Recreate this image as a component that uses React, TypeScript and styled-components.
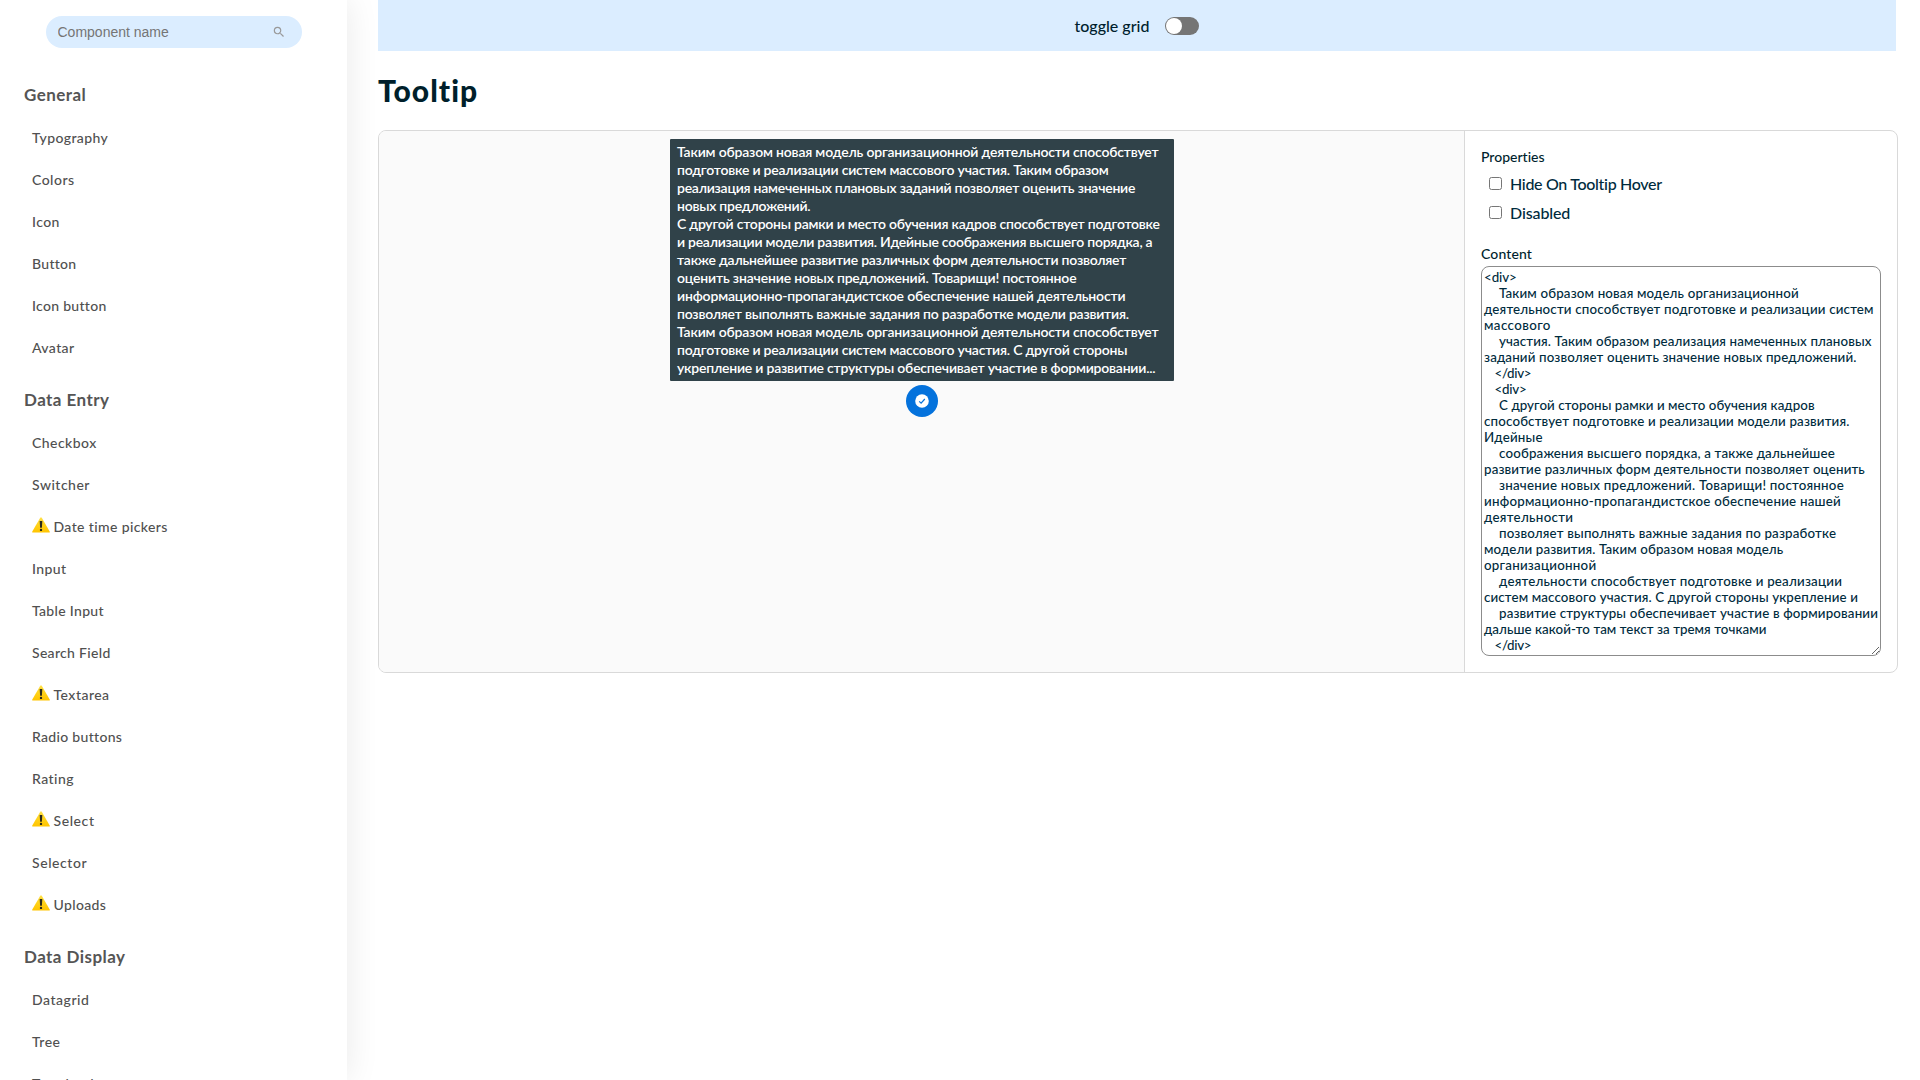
import React from 'react';
import styled, { createGlobalStyle } from 'styled-components';

const GlobalStyle = createGlobalStyle`
  *, *::before, *::after { box-sizing: border-box; }
  html, body { margin: 0; height: 1080px; overflow: hidden; background: #fff; }
  body {
    font-family: Lato, "Noto Sans", sans-serif;
    font-variant-ligatures: none;
    color: #002b3d;
  }
`;

const Page = styled.div`
  display: flex;
  width: 1920px;
  height: 1080px;
  overflow: hidden;
`;

const Sidebar = styled.nav`
  flex: none;
  width: 347px;
  height: 1080px;
  padding-top: 16px;
  overflow: hidden;
  background: #fff;
`;

const SidebarShell = styled.div`
  flex: none;
  width: 347px;
  box-shadow: 0 0 32px rgba(0, 0, 0, 0.09);
`;

const SearchBox = styled.label`
  display: flex;
  align-items: center;
  justify-content: space-between;
  width: 256px;
  height: 32px;
  margin: 0 0 16px 46px;
  padding: 0 16px 0 11.5px;
  border-radius: 16px;
  background: #dbedff;
`;

const SearchInput = styled.input`
  width: 180px;
  padding: 0;
  border: 0;
  outline: 0;
  background: transparent;
  font: 14px "Liberation Sans", Arial, sans-serif;
  &::placeholder { color: #757575; opacity: 1; }
`;

const Group = styled.section`
  padding: 19px 0 0 24px;
`;

const GroupTitle = styled.h3`
  margin: 0 0 12px;
  font-size: 17px;
  line-height: 23px;
  height: 22px;
  font-weight: 700;
  letter-spacing: 0.44px;
  color: #555;
`;

const Item = styled.a<{ $track: number }>`
  display: flex;
  align-items: center;
  gap: 3.5px;
  height: 42px;
  padding-left: 8px;
  font-size: 14px;
  line-height: 18px;
  font-weight: 500;
  letter-spacing: ${(p) => p.$track + 0.03}px;
  color: #505050;
  white-space: nowrap;
`;

const WarningSvg = styled.svg`
  flex: none;
  width: 18px;
  height: 16px;
  margin-bottom: 4px;
`;

const Main = styled.main`
  width: 1520px;
  margin-left: 31px;
`;

const TopBar = styled.header`
  display: flex;
  align-items: center;
  justify-content: center;
  gap: 16px;
  width: 1518px;
  height: 51px;
  background: #dbedff;
  font-size: 16px;
  line-height: 19px;
  font-weight: 500;
  color: #001f2e;
`;

const Switch = styled.button`
  display: flex;
  align-items: center;
  width: 34px;
  height: 18px;
  margin-top: 1px;
  padding: 0 1px;
  border: 0;
  border-radius: 9px;
  background: #757575;
`;

const Knob = styled.span`
  width: 16px;
  height: 16px;
  border-radius: 50%;
  background: #fff;
`;

const Title = styled.h1`
  height: 79px;
  margin: 0;
  padding-top: 21px;
  font-size: 30px;
  line-height: 36px;
  font-weight: 900;
  letter-spacing: 1px;
  color: #001f2b;
`;

const Panel = styled.section`
  display: flex;
  width: 1520px;
  height: 543px;
  border: 1px solid #d9d9d9;
  border-radius: 8px;
  overflow: hidden;
`;

const Canvas = styled.div`
  flex: 1;
  display: flex;
  flex-direction: column;
  align-items: center;
  gap: 4px;
  padding: 8px 0 0;
  background: #fafafa;
`;

const TooltipBox = styled.div`
  width: 504px;
  padding: 4px 7.5px;
  border-radius: 1px;
  background: #304249;
  color: #fff;
  font-size: 14px;
  line-height: 18px;
  font-weight: 600;
`;

const Line = styled.div<{ $track: number; $indent?: number }>`
  padding-left: ${(p) => p.$indent ?? 0}px;
  letter-spacing: ${(p) => p.$track}px;
  white-space: nowrap;
`;

const RoundButton = styled.button`
  display: flex;
  align-items: center;
  justify-content: center;
  width: 32px;
  height: 32px;
  padding: 0;
  border: 0;
  border-radius: 50%;
  background: #0472dc;
`;

const Settings = styled.aside`
  flex: none;
  width: 433px;
  padding: 16px;
  border-left: 1px solid #d9d9d9;
`;

const Caption = styled.div<{ $track: number; $top?: number }>`
  margin: ${(p) => p.$top ?? 0}px 0 2px;
  font-size: 14px;
  line-height: 20px;
  font-weight: 500;
  letter-spacing: ${(p) => p.$track}px;
  color: #001f2e;
`;

const Option = styled.label<{ $track: number }>`
  display: flex;
  align-items: center;
  gap: 8px;
  height: 29px;
  padding-left: 8px;
  font-size: 16px;
  line-height: 19px;
  font-weight: 500;
  letter-spacing: ${(p) => p.$track}px;
`;

const Check = styled.input`
  width: 13px;
  height: 13px;
  margin: 0;
`;

const Editor = styled.div`
  width: 400px;
  height: 390px;
  padding: 2px;
  border: 1px solid #8c8c8c;
  border-radius: 8px;
  overflow: hidden;
  resize: both;
  font-size: 13.333px;
  line-height: 16px;
  font-weight: 500;
`;

type Entry = { name: string; track: number; warn?: boolean };

const groups: { title: string; items: Entry[] }[] = [
  {
    title: 'General',
    items: [
      { name: 'Typography', track: 0.367 },
      { name: 'Colors', track: 0.45 },
      { name: 'Icon', track: 0.4 },
      { name: 'Button', track: 0.274 },
      { name: 'Icon button', track: 0.271 },
      { name: 'Avatar', track: 0.361 },
    ],
  },
  {
    title: 'Data Entry',
    items: [
      { name: 'Checkbox', track: 0.417 },
      { name: 'Switcher', track: 0.478 },
      { name: 'Date time pickers', track: 0.356, warn: true },
      { name: 'Input', track: 0.397 },
      { name: 'Table Input', track: 0.291 },
      { name: 'Search Field', track: 0.282 },
      { name: 'Textarea', track: 0.44, warn: true },
      { name: 'Radio buttons', track: 0.28 },
      { name: 'Rating', track: 0.419 },
      { name: 'Select', track: 0.56, warn: true },
      { name: 'Selector', track: 0.55 },
      { name: 'Uploads', track: 0.32, warn: true },
    ],
  },
  {
    title: 'Data Display',
    items: [
      { name: 'Datagrid', track: 0.498 },
      { name: 'Tree', track: 0.48 },
      { name: 'Tag cloud', track: 0.4 },
    ],
  },
];

const tooltipLines: [string, number][] = [
  ['Таким образом новая модель организационной деятельности способствует', -0.188],
  ['подготовке и реализации систем массового участия. Таким образом', -0.21],
  ['реализация намеченных плановых заданий позволяет оценить значение', -0.241],
  ['новых предложений.', -0.24],
  ['С другой стороны рамки и место обучения кадров способствует подготовке', -0.224],
  ['и реализации модели развития. Идейные соображения высшего порядка, а', -0.265],
  ['также дальнейшее развитие различных форм деятельности позволяет', -0.233],
  ['оценить значение новых предложений. Товарищи! постоянное', -0.18],
  ['информационно-пропагандистское обеспечение нашей деятельности', -0.173],
  ['позволяет выполнять важные задания по разработке модели развития.', -0.22],
  ['Таким образом новая модель организационной деятельности способствует', -0.188],
  ['подготовке и реализации систем массового участия. С другой стороны', -0.21],
  ['укрепление и развитие структуры обеспечивает участие в формировании...', -0.213],
];

const editorLines: [string, number, number][] = [
  ['<div>', -0.1, 0],
  ['Таким образом новая модель организационной', 0.155, 15],
  ['деятельности способствует подготовке и реализации систем', 0.175, 0],
  ['массового', 0.4, 0],
  ['участия. Таким образом реализация намеченных плановых', 0.13, 15],
  ['заданий позволяет оценить значение новых предложений.', 0.142, 0],
  ['</div>', -0.3, 10.5],
  ['<div>', -0.25, 10.5],
  ['С другой стороны рамки и место обучения кадров', 0.065, 15],
  ['способствует подготовке и реализации модели развития.', 0.16, 0],
  ['Идейные', 0.216, 0],
  ['соображения высшего порядка, а также дальнейшее', 0.165, 15],
  ['развитие различных форм деятельности позволяет оценить', 0.145, 0],
  ['значение новых предложений. Товарищи! постоянное', 0.228, 15],
  ['информационно-пропагандистское обеспечение нашей', 0.225, 0],
  ['деятельности', 0.31, 0],
  ['позволяет выполнять важные задания по разработке', 0.168, 15],
  ['модели развития. Таким образом новая модель', 0.122, 0],
  ['организационной', 0.24, 0],
  ['деятельности способствует подготовке и реализации', 0.205, 15],
  ['систем массового участия. С другой стороны укрепление и', 0.13, 0],
  ['развитие структуры обеспечивает участие в формировании', 0.148, 15],
  ['дальше какой-то там текст за тремя точками', 0.06, 0],
  ['</div>', -0.3, 10.5],
];

const WarningIcon = () => (
  <WarningSvg viewBox="0 0 18 16">
    <defs>
      <linearGradient id="warn" x1="0" y1="0" x2="0" y2="1">
        <stop offset="0" stopColor="#ffe14a" />
        <stop offset="0.5" stopColor="#ffd21a" />
        <stop offset="1" stopColor="#ffc400" />
      </linearGradient>
    </defs>
    <path
      d="M8.1 0.9 Q9 -0.4 9.9 0.9 L17.7 14.4 Q18.2 15.6 17 15.6 H1 Q-0.2 15.6 0.3 14.4 Z"
      fill="url(#warn)"
    />
    <path d="M7.7 4 H10.3 L9.9 10.8 H8.1 Z" fill="#2b2a1c" />
    <circle cx="9" cy="12.9" r="1.2" fill="#2b2a1c" />
  </WarningSvg>
);

const SearchIcon = () => (
  <svg width="14" height="14" viewBox="0 0 24 24" fill="#999">
    <path d="M15.5 14h-.79l-.28-.27A6.47 6.47 0 0 0 16 9.5 6.5 6.5 0 1 0 9.5 16c1.61 0 3.09-.59 4.23-1.57l.27.28v.79l5 4.99L20.49 19l-4.99-5zm-6 0C7.01 14 5 11.99 5 9.5S7.01 5 9.5 5 14 7.01 14 9.5 11.99 14 9.5 14z" />
  </svg>
);

const CheckCircleIcon = () => (
  <svg width="16" height="16" viewBox="0 0 16 16">
    <circle cx="8" cy="8" r="6.8" fill="#fff" />
    <path d="M5.2 8.4 L7.1 10.2 L10.8 6" fill="none" stroke="#0472dc" strokeWidth="1.2" />
  </svg>
);

export default function App() {
  return (
    <>
      <GlobalStyle />
      <Page>
        <SidebarShell>
          <Sidebar>
            <SearchBox>
              <SearchInput placeholder="Component name" />
              <SearchIcon />
            </SearchBox>
            {groups.map((group) => (
              <Group key={group.title}>
                <GroupTitle>{group.title}</GroupTitle>
                {group.items.map((item) => (
                  <Item key={item.name} $track={item.track}>
                    {item.warn && <WarningIcon />}
                    <span>{item.name}</span>
                  </Item>
                ))}
              </Group>
            ))}
          </Sidebar>
        </SidebarShell>
        <Main>
          <TopBar>
            <span>toggle grid</span>
            <Switch aria-label="toggle grid">
              <Knob />
            </Switch>
          </TopBar>
          <Title>Tooltip</Title>
          <Panel>
            <Canvas>
              <TooltipBox>
                {tooltipLines.map(([text, track], i) => (
                  <Line key={i} $track={track}>{text}</Line>
                ))}
              </TooltipBox>
              <RoundButton aria-label="confirm">
                <CheckCircleIcon />
              </RoundButton>
            </Canvas>
            <Settings>
              <Caption $track={0}>Properties</Caption>
              <Option $track={-0.31}>
                <Check type="checkbox" />
                Hide On Tooltip Hover
              </Option>
              <Option $track={-0.12}>
                <Check type="checkbox" />
                Disabled
              </Option>
              <Caption $track={0.12} $top={17}>Content</Caption>
              <Editor>
                {editorLines.map(([text, track, indent], i) => (
                  <Line key={i} $track={track} $indent={indent}>{text}</Line>
                ))}
              </Editor>
            </Settings>
          </Panel>
        </Main>
      </Page>
    </>
  );
}
